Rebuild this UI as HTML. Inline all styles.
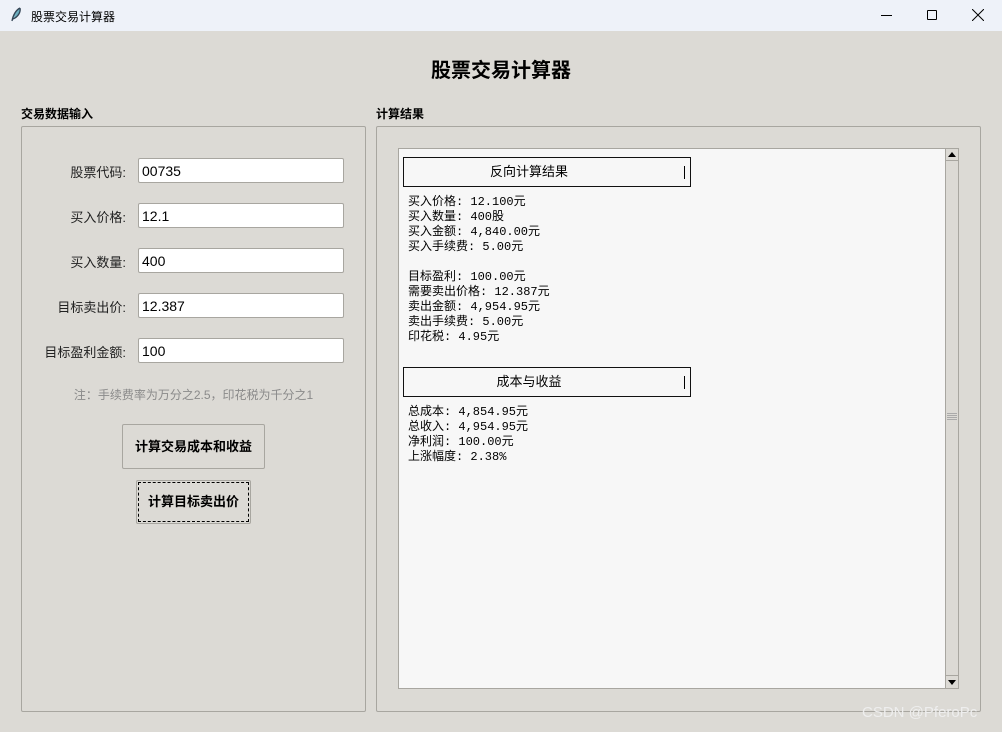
<!DOCTYPE html>
<html><head><meta charset="utf-8"><style>
*{margin:0;padding:0;box-sizing:border-box}
body{width:1002px;height:732px;background:#dcdad5;position:relative;overflow:hidden;font-family:"Liberation Sans","Noto Sans CJK SC",sans-serif;color:#000}
.a{position:absolute}
.tb{left:0;top:0;width:1002px;height:31px;background:#eef2f9}
.ent{position:absolute;left:138px;width:206px;height:25px;background:#fff;border:1px solid #a8a6a0;border-radius:2px;font-size:14px;padding:4px 0 0 3px}
.lab{position:absolute;right:876px;font-size:13px;color:#222;text-align:right;white-space:nowrap}
.frame{position:absolute;border:1px solid #a8a6a0;border-radius:2px}
.mono{font-family:"Liberation Mono","Noto Sans CJK SC",monospace;font-size:12px;line-height:15px;white-space:pre}
.hd{position:absolute;left:403px;width:288px;height:30px;border:1px solid #111;background:#f7f7f7;font-size:13px;text-align:center;line-height:28px;padding-right:36px}
.hd::after{content:"";position:absolute;right:5px;top:8px;width:1px;height:13px;background:#000}
</style></head><body>
<div class="a tb"></div>
<svg class="a" style="left:10px;top:7px" width="12" height="16" viewBox="0 0 12 16"><path d="M10 1C6 3 3 8 2 14M10 1C11 5 8 10 3 12" stroke="#345" stroke-width="1.3" fill="#6ab"/></svg>
<div class="a" style="left:31px;top:8px;font-size:12px">股票交易计算器</div>
<div class="a" style="left:881px;top:15px;width:11px;height:1px;background:#000"></div>
<div class="a" style="left:927px;top:10px;width:10px;height:10px;border:1px solid #000;border-radius:1px"></div>
<svg class="a" style="left:972px;top:9px" width="12" height="12"><path d="M0 0L12 12M12 0L0 12" stroke="#000" stroke-width="1"/></svg>

<div class="a" style="left:0;top:54px;width:1002px;text-align:center;font-size:20px;font-weight:bold">股票交易计算器</div>

<div class="a" style="left:21px;top:105px;font-size:12px;font-weight:bold">交易数据输入</div>
<div class="frame" style="left:21px;top:126px;width:345px;height:586px"></div>
<div class="lab" style="top:162px">股票代码:</div><div class="ent" style="top:158px">00735</div>
<div class="lab" style="top:207px">买入价格:</div><div class="ent" style="top:203px">12.1</div>
<div class="lab" style="top:252px">买入数量:</div><div class="ent" style="top:248px">400</div>
<div class="lab" style="top:297px">目标卖出价:</div><div class="ent" style="top:293px">12.387</div>
<div class="lab" style="top:342px">目标盈利金额:</div><div class="ent" style="top:338px">100</div>
<div class="a" style="left:21px;width:345px;top:386px;text-align:center;font-size:12px;color:#8a8a8a">注：手续费率为万分之2.5，印花税为千分之1</div>
<div class="a" style="left:122px;top:424px;width:143px;height:45px;border:1px solid #a8a6a0;border-radius:2px;font-size:13px;font-weight:bold;text-align:center;line-height:43px">计算交易成本和收益</div>
<div class="a" style="left:136px;top:480px;width:115px;height:44px;border:1px solid #a8a6a0;border-radius:2px;font-size:13px;font-weight:bold;text-align:center;line-height:42px"><div style="position:absolute;inset:1px;border:1px dashed #000"></div>计算目标卖出价</div>

<div class="a" style="left:376px;top:105px;font-size:12px;font-weight:bold">计算结果</div>
<div class="frame" style="left:376px;top:126px;width:605px;height:586px"></div>
<div class="a" style="left:398px;top:148px;width:548px;height:541px;background:#f7f7f7;border:1px solid #a8a6a0"></div>
<div class="a" style="left:945px;top:148px;width:14px;height:541px;background:#dcdad5;border:1px solid #a8a6a0"></div>
<div class="a" style="left:946px;top:149px;width:12px;height:12px;border-bottom:1px solid #a8a6a0"><div style="margin:3px auto 0;width:0;height:0;border-left:4px solid transparent;border-right:4px solid transparent;border-bottom:5px solid #000"></div></div>
<div class="a" style="left:946px;top:675px;width:12px;height:13px;border-top:1px solid #a8a6a0"><div style="margin:4px auto 0;width:0;height:0;border-left:4px solid transparent;border-right:4px solid transparent;border-top:5px solid #000"></div></div>
<div class="a" style="left:947px;top:413px;width:10px;height:8px;background:repeating-linear-gradient(#aaa 0 1px,transparent 1px 2px)"></div>
<div class="hd" style="top:157px">反向计算结果</div>
<div class="a mono" style="left:408px;top:195px">买入价格: 12.100元
买入数量: 400股
买入金额: 4,840.00元
买入手续费: 5.00元

目标盈利: 100.00元
需要卖出价格: 12.387元
卖出金额: 4,954.95元
卖出手续费: 5.00元
印花税: 4.95元</div>
<div class="hd" style="top:367px">成本与收益</div>
<div class="a mono" style="left:408px;top:405px">总成本: 4,854.95元
总收入: 4,954.95元
净利润: 100.00元
上涨幅度: 2.38%</div>
<div class="a" style="left:862px;top:704px;font-size:15px;color:#eee">CSDN @PferoPc</div>
</body></html>
